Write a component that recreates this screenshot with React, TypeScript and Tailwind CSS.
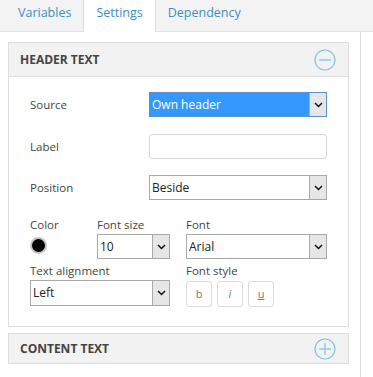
import React from 'react'

const font = { fontFamily: '"Open Sans", "Noto Sans", sans-serif' }

// fake old-style select box
const Select = ({ value, className, active }: { value: string; className: string; active?: boolean }) => (
  <div
    className={`flex items-stretch border ${active ? 'border-[#5d8fc9] bg-[#3399ff]' : 'border-[#a9a9a9] bg-white'} ${className}`}
  >
    <div className={`flex-1 flex items-center pl-[2px] text-[12px] ${active ? 'text-white' : 'text-[#222]'}`}>
      {value}
    </div>
    <div className="w-[17px] border-l border-[#a9a9a9] bg-[#e6e6e6] flex items-center justify-center">
      <svg width="9" height="6" viewBox="0 0 9 6">
        <path d="M1 1 L4.5 4.5 L8 1" fill="none" stroke="#111" strokeWidth="1.5" />
      </svg>
    </div>
  </div>
)

const CircleIcon = ({ plus }: { plus?: boolean }) => (
  <svg width="22" height="22" viewBox="0 0 22 22">
    <circle cx="11" cy="11" r="10" fill="none" stroke="#7cc3de" strokeWidth="1.2" />
    <path d="M5 11 H17" stroke="#7cc3de" strokeWidth="1.2" />
    {plus && <path d="M11 5 V17" stroke="#7cc3de" strokeWidth="1.2" />}
  </svg>
)

const StyleBtn = ({ children }: { children: React.ReactNode }) => (
  <div className="w-[26px] h-[26px] border border-[#dcdcdc] rounded-[3px] flex items-center justify-center text-[11px] text-[#777]">
    {children}
  </div>
)

export default function App() {
  return (
    <div style={font} className="w-[373px] h-[377px] bg-white overflow-hidden text-[#333]">
      {/* tabs */}
      <div className="h-[32px] bg-[#f3f3f3] border-b border-[#e2e2e2] flex items-stretch pl-[6px] text-[12.5px]">
        <div className="px-[12px] flex items-center pb-[5px] text-[#3b8fc4]">Variables</div>
        <div className="px-[12px] flex items-center pb-[5px] text-[#3b8fc4] bg-white border-x border-[#dcdcdc] mb-[-1px]">
          Settings
        </div>
        <div className="px-[12px] flex items-center pb-[5px] text-[#3b8fc4]">Dependency</div>
      </div>

      <div className="w-[361px] h-[345px] border-r border-[#dedede] pl-[8px] pr-[11px] pt-[10px]">
        {/* header text panel */}
        <div className="border border-[#dedede]">
          <div className="h-[34px] bg-[#f2f2f2] border-b border-[#dedede] flex items-center justify-between pl-[11px] pr-[12px]">
            <span className="text-[12px] font-bold text-[#444]">HEADER TEXT</span>
            <CircleIcon />
          </div>
          <div className="pl-[21px] pr-[21px] pt-[15px] pb-[19px] text-[11.5px] text-[#444]">
            <div className="flex items-center h-[25px]">
              <span className="w-[119px]">Source</span>
              <Select value="Own header" active className="w-[178px] h-[25px]" />
            </div>
            <div className="flex items-center h-[25px] mt-[17px]">
              <span className="w-[119px]">Label</span>
              <div className="w-[178px] h-[25px] border border-[#d6d6d6] rounded-[3px]" />
            </div>
            <div className="flex items-center h-[25px] mt-[16px]">
              <span className="w-[119px]">Position</span>
              <Select value="Beside" className="w-[178px] h-[25px]" />
            </div>

            <div className="flex mt-[16px]">
              <div className="w-[67px]">
                <div className="h-[18px] leading-[18px]">Color</div>
                <div className="mt-[3px] w-[17px] h-[17px] rounded-full bg-black border-[2px] border-[#c4c4c4]" />
              </div>
              <div className="w-[89px]">
                <div className="h-[18px] leading-[18px]">Font size</div>
                <Select value="10" className="w-[73px] h-[25px]" />
              </div>
              <div>
                <div className="h-[18px] leading-[18px]">Font</div>
                <Select value="Arial" className="w-[141px] h-[25px]" />
              </div>
            </div>

            <div className="flex mt-[3px]">
              <div className="w-[156px]">
                <div className="h-[18px] leading-[18px]">Text alignment</div>
                <Select value="Left" className="w-[140px] h-[26px]" />
              </div>
              <div>
                <div className="h-[18px] leading-[18px]">Font style</div>
                <div className="flex gap-[5px] mt-[1px]">
                  <StyleBtn>b</StyleBtn>
                  <StyleBtn>
                    <span className="italic">i</span>
                  </StyleBtn>
                  <StyleBtn>
                    <span className="underline">u</span>
                  </StyleBtn>
                </div>
              </div>
            </div>
          </div>
        </div>

        {/* content text panel */}
        <div className="mt-[6px] border border-[#dedede] h-[31px] bg-[#f2f2f2] flex items-center justify-between pl-[11px] pr-[12px]">
          <span className="text-[12px] font-bold text-[#444]">CONTENT TEXT</span>
          <CircleIcon plus />
        </div>
      </div>
    </div>
  )
}
